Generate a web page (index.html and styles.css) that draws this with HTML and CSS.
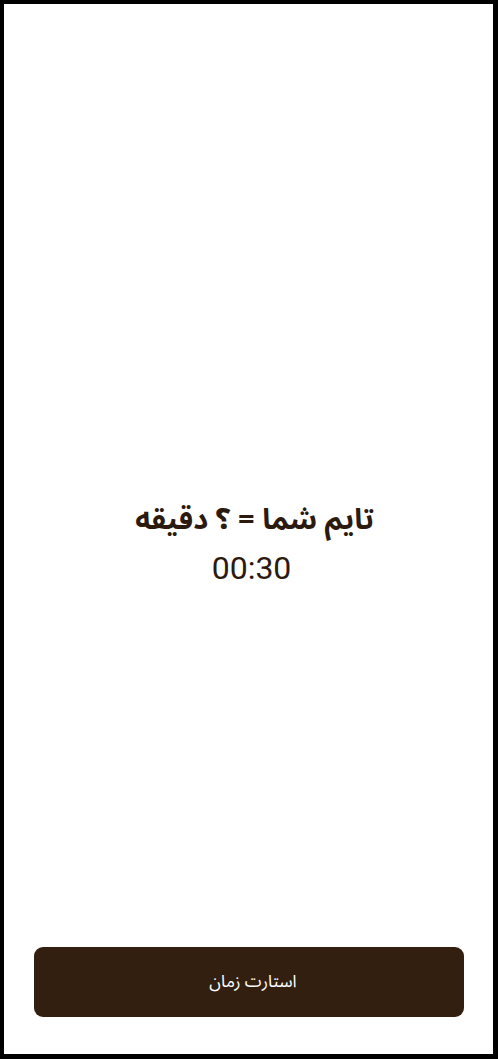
FILE: index.html
```html
<!DOCTYPE html>
<html lang="fa" dir="rtl">
<head>
<meta charset="utf-8">
<link rel="stylesheet" href="styles.css">
</head>
<body>
<div class="frame">
  <main class="center">
    <h1 class="title">تایم شما = ؟ دقیقه</h1>
    <div class="time">00:30</div>
  </main>
  <button class="start">استارت زمان</button>
</div>
</body>
</html>
```
FILE: styles.css
```css
html, body { margin: 0; padding: 0; background: #fff; }
.frame {
  box-sizing: border-box;
  width: 498px;
  height: 1059px;
  border-style: solid;
  border-color: #000;
  border-width: 4px 5px 5px 4px;
  display: flex;
  flex-direction: column;
  background: #fff;
}
.center {
  flex: 1;
  display: flex;
  flex-direction: column;
  align-items: center;
  justify-content: flex-start;
  padding-top: 496px;
}
.title {
  margin: 0;
  padding-left: 12px;
  font-family: "Noto Sans Arabic", "DejaVu Sans", sans-serif;
  font-weight: 700;
  font-size: 29px;
  line-height: 40px;
  color: #2b1a0d;
}
.time {
  margin-top: 8px;
  padding-left: 6px;
  font-family: Roboto, "Noto Sans", sans-serif;
  font-size: 32px;
  line-height: 40px;
  color: #2b1a0d;
  direction: ltr;
}
.start {
  margin: 0 29px 37px 30px;
  padding: 0 0 0 8px;
  height: 70px;
  border: none;
  border-radius: 9px;
  background: #321f10;
  color: #fff;
  font-family: "Noto Sans Arabic", "DejaVu Sans", sans-serif;
  font-size: 17px;
}
```
